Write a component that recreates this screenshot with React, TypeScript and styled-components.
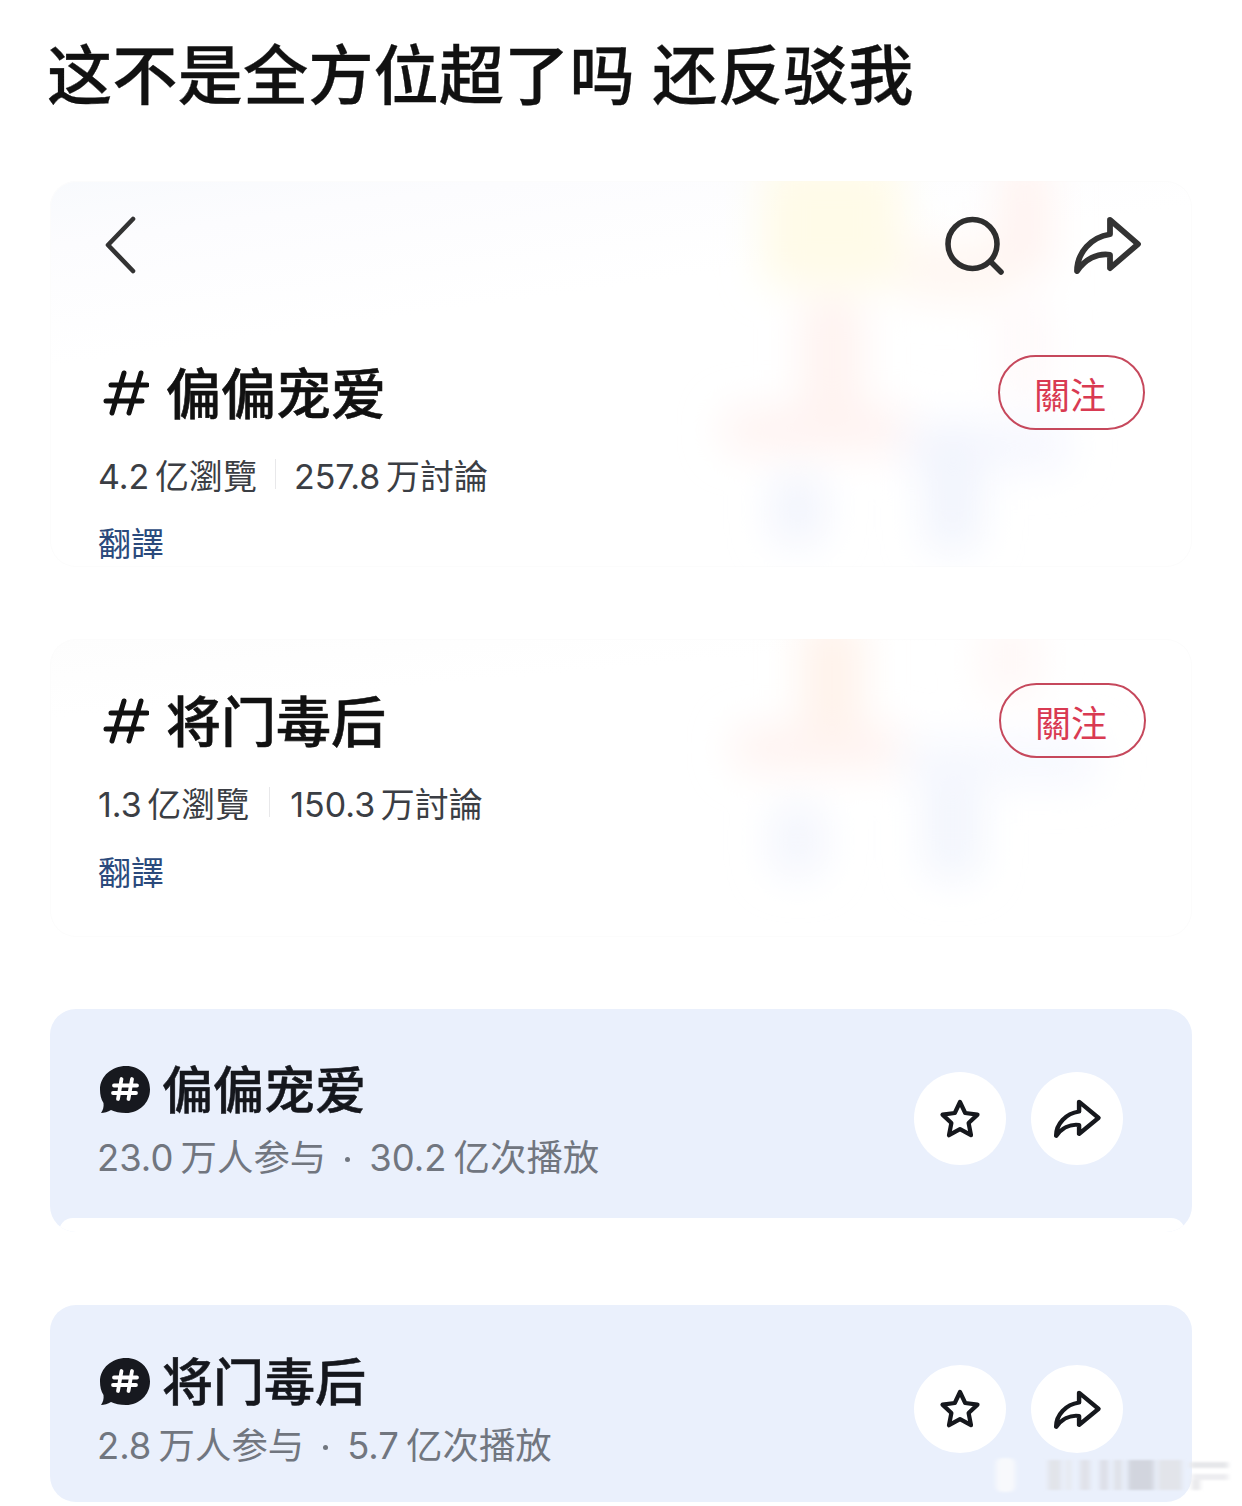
import React from "react";
import styled, { createGlobalStyle } from "styled-components";

const Global = createGlobalStyle`
  html, body { margin: 0; padding: 0; background: #fff; }
  body { font-family: Inter, "Noto Sans CJK SC", "Noto Sans CJK TC", sans-serif; }
`;

const Page = styled.div`
  position: relative;
  width: 1242px;
  height: 1506px;
  overflow: hidden;
  padding: 26px 50px 0;
  box-sizing: border-box;
  background: #fff;
`;

const Headline = styled.h1`
  margin: 0 0 65px -3px;
  font-size: 65.3px;
  line-height: 90px;
  font-weight: 500;
  word-spacing: 3px;
  color: #111;
  white-space: pre;
  -webkit-text-stroke: 0.3px #111;
  font-family: "Noto Sans CJK SC", sans-serif;
`;

const TopicCard = styled.section<{ $height: number; $top: number; $tint?: boolean }>`
  position: relative;
  box-sizing: border-box;
  height: ${(p) => p.$height}px;
  padding: ${(p) => p.$top}px 47px 0 48px;
  margin-bottom: 72px;
  border-radius: 26px;
  overflow: hidden;
  background: ${(p) =>
    p.$tint
      ? "linear-gradient(172deg, #f8fafd 0%, #fcfcfe 12%, #ffffff 34%)"
      : "linear-gradient(175deg, #fdfdfd 0%, #ffffff 20%)"};
  box-shadow: inset 0 0 0 1px #fcfcfc;
`;

const Glow = styled.svg`
  position: absolute;
  left: 0;
  top: 0;
  pointer-events: none;
`;

const Layer = styled.div`
  position: relative;
`;

const Nav = styled.div`
  display: flex;
  align-items: center;
  height: 60px;
  margin-bottom: 80px;
`;

const NavSpacer = styled.div`
  flex: 1;
`;

const NavIcon = styled.svg<{ $gap?: number; $end?: number }>`
  display: block;
  margin-left: ${(p) => p.$gap ?? 0}px;
  margin-right: ${(p) => p.$end ?? 0}px;
`;

const TopicHeader = styled.div`
  display: flex;
  align-items: center;
  justify-content: space-between;
  height: 75px;
`;

const TopicName = styled.div`
  display: flex;
  align-items: center;
  gap: 17px;
  padding-left: 5px;
`;

const TopicText = styled.h2`
  margin: 0;
  padding-bottom: 4px;
  font-size: 55px;
  line-height: 71px;
  font-weight: 500;
  color: #111;
  -webkit-text-stroke: 0.6px #111;
  font-family: "Noto Sans CJK SC", sans-serif;
`;

const FollowButton = styled.button<{ $shift?: number }>`
  box-sizing: border-box;
  width: 147px;
  height: 75px;
  margin-right: ${(p) => p.$shift ?? 0}px;
  padding: 0 3px 0 0;
  border: 2px solid #c6485c;
  border-radius: 38px;
  background: transparent;
  color: #d93a52;
  font-size: 36px;
  line-height: 1;
  font-family: "Noto Sans CJK TC", sans-serif;
  font-weight: 400;
`;

const Stats = styled.div<{ $gap: number }>`
  display: flex;
  align-items: center;
  gap: ${(p) => p.$gap}px;
  margin-top: 21px;
  height: 46px;
  font-size: 34px;
  color: #3b3e44;
  word-spacing: -4px;
  font-family: Inter, "Noto Sans CJK TC", sans-serif;
`;

const StatDivider = styled.i`
  display: block;
  width: 1px;
  height: 30px;
  background: #e8e8ea;
`;

const Translate = styled.div<{ $gap: number }>`
  margin-top: ${(p) => p.$gap}px;
  font-size: 33px;
  line-height: 40px;
  color: #2b4a7c;
  font-family: "Noto Sans CJK TC", sans-serif;
`;

const ChallengeCard = styled.section<{ $height: number; $top: number }>`
  position: relative;
  box-sizing: border-box;
  height: ${(p) => p.$height}px;
  margin-bottom: 73px;
  padding: ${(p) => p.$top}px 69px 0 48px;
  border-radius: 26px;
  background: #eaf0fc;
  overflow: hidden;
`;

const ChallengeRow = styled.div`
  display: flex;
  align-items: center;
  justify-content: space-between;
`;

const ChallengeTitle = styled.div`
  display: flex;
  align-items: center;
  gap: 12px;
  padding-left: 2px;
`;

const ChallengeText = styled.h3`
  margin: 0;
  padding-bottom: 6px;
  font-size: 51px;
  line-height: 54px;
  font-weight: 500;
  color: #15171d;
  -webkit-text-stroke: 0.5px #15171d;
  font-family: "Noto Sans CJK SC", sans-serif;
`;

const ChallengeMeta = styled.div<{ $gap: number }>`
  display: flex;
  align-items: center;
  margin: ${(p) => p.$gap}px 0 0 -1px;
  font-size: 36.4px;
  line-height: 50px;
  color: #71767f;
  font-family: Inter, "Noto Sans CJK SC", sans-serif;
  white-space: pre;
  word-spacing: -3px;
`;

const MetaDot = styled.i`
  display: block;
  width: 5px;
  height: 5px;
  margin: 2px 19px 0;
  border-radius: 50%;
  background: #71767f;
`;

const Actions = styled.div<{ $lift: number }>`
  display: flex;
  gap: 25px;
  margin-bottom: ${(p) => p.$lift}px;
`;

const RoundButton = styled.button<{ $height: number }>`
  display: flex;
  align-items: center;
  justify-content: center;
  width: 92px;
  height: ${(p) => p.$height}px;
  padding: 0;
  border: 0;
  border-radius: 50%;
  background: #fff;
`;

const BottomLip = styled.div`
  position: absolute;
  left: 9px;
  right: 7px;
  bottom: 0;
  height: 14px;
  background: #fff;
  border-radius: 14px 14px 0 0;
`;

const Watermark = styled.svg`
  position: absolute;
  right: 0;
  bottom: 10px;
`;

type Blob = [number, number, number, number, string];

const TOP_BLOBS: Blob[] = [
  [712, -20, 140, 125, "#fffbe8"],
  [850, 60, 110, 60, "#fff7f2"],
  [950, -20, 50, 115, "#fff3f0"],
  [752, 115, 60, 125, "#fff3f0"],
  [672, 228, 190, 42, "#fff3f1"],
  [850, 240, 170, 50, "#f6f7fe"],
  [722, 292, 52, 72, "#f2f4fd"],
  [875, 250, 55, 120, "#f1f4fd"],
  [950, 120, 50, 100, "#fef9fa"],
];

const BOTTOM_BLOBS: Blob[] = [
  [752, -20, 60, 112, "#fff2ea"],
  [930, -20, 60, 80, "#fff8f7"],
  [682, 88, 170, 42, "#fff3f0"],
  [850, 100, 200, 46, "#f6f8fe"],
  [722, 165, 52, 72, "#f3f5fd"],
  [875, 140, 55, 100, "#f2f5fd"],
];

function HashGlow({ id, blobs, height }: { id: string; blobs: Blob[]; height: number }) {
  return (
    <Glow width={1142} height={height} viewBox={`0 0 1142 ${height}`} aria-hidden>
      <defs>
        <filter id={id} x="-30%" y="-30%" width="160%" height="160%">
          <feGaussianBlur stdDeviation="20" />
        </filter>
      </defs>
      <g filter={`url(#${id})`}>
        {blobs.map(([x, y, w, h, c], i) => (
          <rect key={i} x={x} y={y} width={w} height={h} rx={18} fill={c} />
        ))}
      </g>
    </Glow>
  );
}

const SHARE_PATH = "M39 6 L67 31 L39 56 L39 42 C26 40 14 47 6 59 C6 40 20 24 39 21 Z";

function ShareIcon({ width, height, stroke, color, gap, end }: { width: number; height: number; stroke: number; color: string; gap?: number; end?: number }) {
  return (
    <NavIcon $gap={gap} $end={end} width={width} height={height} viewBox="0 0 72 64" preserveAspectRatio="none" fill="none">
      <path d={SHARE_PATH} stroke={color} strokeWidth={stroke} strokeLinejoin="round" strokeLinecap="round" />
    </NavIcon>
  );
}

function StarIcon() {
  return (
    <svg width="44" height="42" viewBox="0 0 44 42" fill="none">
      <path
        d="M22 4 L27.2 15 L39.500 16.600 L30.600 25 L33 37.200 L22 31.200 L11 37.200 L13.400 25 L4.500 16.600 L16.800 15 Z"
        stroke="#16181d"
        strokeWidth="4.200"
        strokeLinejoin="round"
      />
    </svg>
  );
}

function HashMark() {
  return (
    <svg width="46" height="46" viewBox="0 0 46 46" fill="none" stroke="#111" strokeWidth="5" strokeLinecap="round">
      <path d="M21 3 L9 43 M38 3 L26 43 M8 15 L44 15 M3 31 L39 31" />
    </svg>
  );
}

function BubbleMark() {
  return (
    <svg width="50" height="50" viewBox="0 0 50 50">
      <path d="M26 1 C40 1 50 11 50 24.500 C50 38 39 48 26 48 C20 48 15 47 11 45 C8 47 4 48 1 48 C3 45 4 42 3.500 38 C1 34 0 30 0 24.500 C0 11 12 1 26 1 Z" fill="#17191f" />
      <path d="M21.500 14 L18 34 M32 14 L28.500 34 M14 20.500 L37 20.500 M13 28 L36 28" stroke="#fff" strokeWidth="3.800" strokeLinecap="round" fill="none" />
    </svg>
  );
}

function Challenge({ name, left, right, height, top, gap, btn, lift, lip }: { name: string; left: string; right: string; height: number; top: number; gap: number; btn: number; lift: number; lip?: boolean }) {
  return (
    <ChallengeCard $height={height} $top={top}>
      <ChallengeRow>
        <div>
          <ChallengeTitle>
            <BubbleMark />
            <ChallengeText>{name}</ChallengeText>
          </ChallengeTitle>
          <ChallengeMeta $gap={gap}>
            <span>{left}</span>
            <MetaDot />
            <span>{right}</span>
          </ChallengeMeta>
        </div>
        <Actions $lift={lift}>
          <RoundButton $height={btn} aria-label="收藏"><StarIcon /></RoundButton>
          <RoundButton $height={btn} aria-label="分享">
            <ShareIcon width={50} height={41} stroke={6.400} color="#16181d" end={1} />
          </RoundButton>
        </Actions>
      </ChallengeRow>
      {lip && <BottomLip />}
    </ChallengeCard>
  );
}

export default function App() {
  return (
    <Page>
      <Global />
      <Headline>这不是全方位超了吗 还反驳我</Headline>

      <TopicCard $height={386} $top={34} $tint>
        <HashGlow id="glow-a" blobs={TOP_BLOBS} height={386} />
        <Layer>
          <Nav>
            <NavIcon width="40" height="60" viewBox="0 0 40 60" fill="none">
              <path d="M35 4 L10 30 L35 56" stroke="#333" strokeWidth="4.600" strokeLinecap="round" strokeLinejoin="round" />
            </NavIcon>
            <NavSpacer />
            <NavIcon width="62" height="62" viewBox="0 0 62 62" fill="none">
              <circle cx="28.500" cy="30" r="24.500" stroke="#2e2e2e" strokeWidth="5.600" />
              <path d="M47 48 L57 58" stroke="#2e2e2e" strokeWidth="5.600" strokeLinecap="round" />
            </NavIcon>
            <ShareIcon gap={65} end={2} width={72} height={62} stroke={5.800} color="#333" />
          </Nav>
          <TopicHeader>
            <TopicName>
              <HashMark />
              <TopicText>偏偏宠爱</TopicText>
            </TopicName>
            <FollowButton>關注</FollowButton>
          </TopicHeader>
          <Stats $gap={18}>
            <span>4.2 亿瀏覽</span>
            <StatDivider />
            <span>257.8 万討論</span>
          </Stats>
          <Translate $gap={25}>翻譯</Translate>
        </Layer>
      </TopicCard>

      <TopicCard $height={298} $top={44}>
        <HashGlow id="glow-b" blobs={BOTTOM_BLOBS} height={298} />
        <Layer>
          <TopicHeader>
            <TopicName>
              <HashMark />
              <TopicText>将门毒后</TopicText>
            </TopicName>
            <FollowButton $shift={-1}>關注</FollowButton>
          </TopicHeader>
          <Stats $gap={20}>
            <span>1.3 亿瀏覽</span>
            <StatDivider />
            <span>150.3 万討論</span>
          </Stats>
          <Translate $gap={26}>翻譯</Translate>
        </Layer>
      </TopicCard>

      <Challenge name="偏偏宠爱" left="23.0 万人参与" right="30.2 亿次播放" height={223} top={51} gap={13} btn={93} lift={6} lip />
      <Challenge name="将门毒后" left="2.8 万人参与" right="5.7 亿次播放" height={197} top={47} gap={9} btn={88} lift={5} />

      <Watermark width={250} height={50} viewBox="0 0 250 50" aria-hidden>
        <defs>
          <filter id="wm"><feGaussianBlur stdDeviation="2.500 1" /></filter>
        </defs>
        <g filter="url(#wm)">
          <rect x="4" y="12" width="19" height="34" rx="6" fill="#f8f9fc" />
          <rect x="56" y="14" width="13" height="30" fill="#e2e4ea" />
          <rect x="74" y="14" width="5" height="30" fill="#e6e8ee" />
          <rect x="88" y="14" width="10" height="30" fill="#e0e2e9" />
          <rect x="108" y="14" width="8" height="30" fill="#dcdee6" />
          <rect x="122" y="14" width="8" height="30" fill="#dfe1e8" />
          <rect x="136" y="14" width="26" height="30" fill="#d2d5de" />
          <rect x="166" y="14" width="24" height="30" fill="#e2e4ea" />
          <rect x="198" y="16" width="38" height="6" fill="#e6e7ea" />
          <rect x="200" y="28" width="36" height="6" fill="#ededf0" />
          <rect x="200" y="34" width="8" height="10" fill="#e8e8eb" />
        </g>
      </Watermark>
    </Page>
  );
}
